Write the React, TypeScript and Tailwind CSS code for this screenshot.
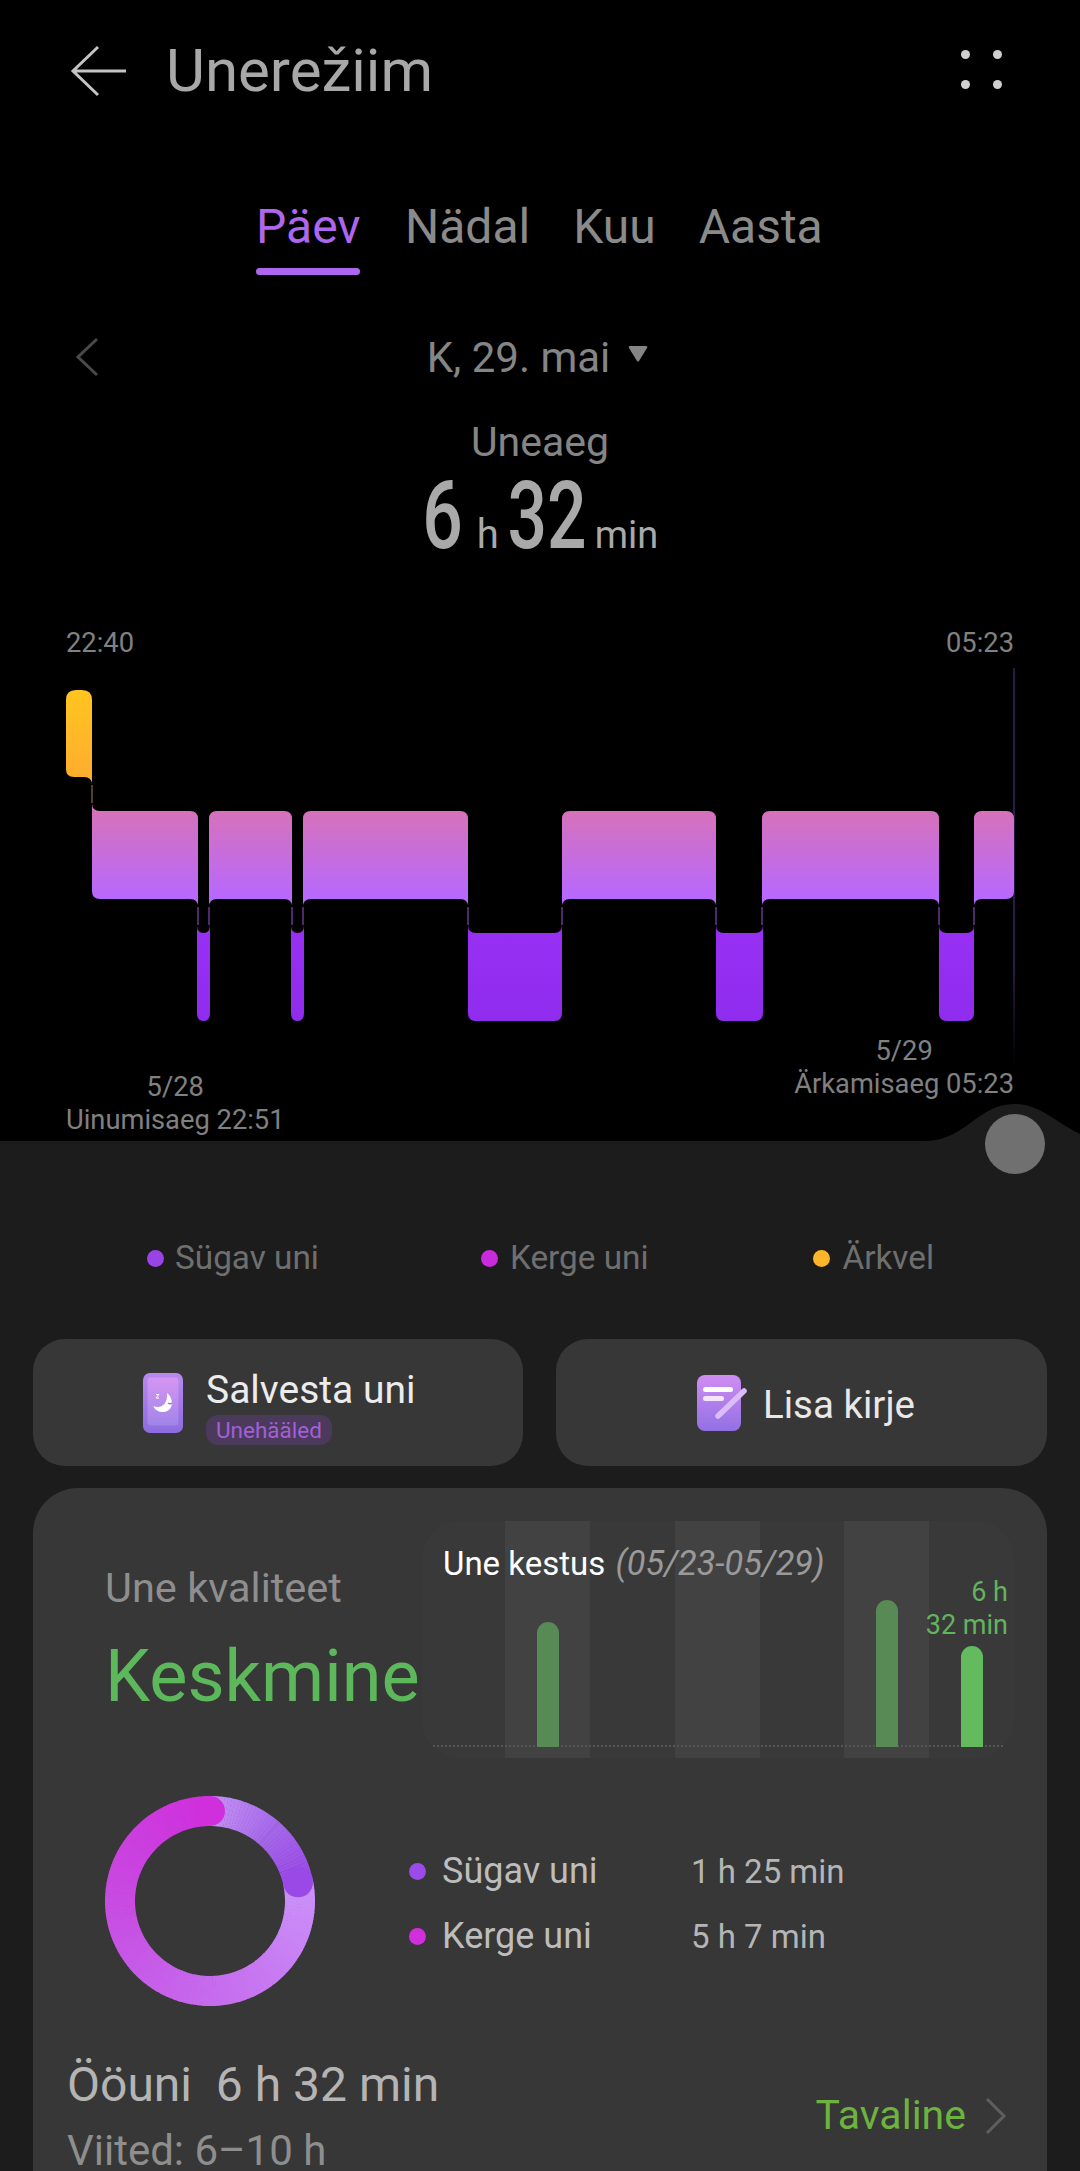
import React from 'react';

const TOP = 811;
const MID = 899;
const DEEP_TOP = 933;
const DEEP_BOTTOM = 1021;

// x ranges of the sleep stages, in page pixels
const LIGHT = [
  [92, 198],
  [209, 292],
  [303, 468],
  [562, 716],
  [762, 939],
  [974, 1014],
];
const DEEP = [
  [197, 210],
  [291, 304],
  [468, 562],
  [716, 763],
  [939, 974],
];
const LINKS = [198, 209, 292, 303, 468, 562, 716, 762, 939, 974];

const lightPath = (l: number, r: number, i: number) => {
  const first = i === 0;
  const last = i === LIGHT.length - 1;
  const c = 8;
  const topLeft = first ? `M${l} ${TOP - c} Q${l} ${TOP} ${l + c} ${TOP}` : `M${l} ${TOP + c} Q${l} ${TOP} ${l + c} ${TOP}`;
  const right = `H${r - c} Q${r} ${TOP} ${r} ${TOP + c}`;
  const bottomRight = last ? `V${MID - c} Q${r} ${MID} ${r - c} ${MID}` : `V${MID + c} Q${r} ${MID} ${r - c} ${MID}`;
  const bottomLeft = first ? `H${l + c} Q${l} ${MID} ${l} ${MID - c}` : `H${l + c} Q${l} ${MID} ${l} ${MID + c}`;
  return `${topLeft} ${right} ${bottomRight} ${bottomLeft} Z`;
};

const deepPath = (l: number, r: number) => {
  const c = Math.min(8, (r - l) / 2);
  return `M${l} ${DEEP_TOP - 8} Q${l} ${DEEP_TOP} ${l + c} ${DEEP_TOP} H${r - c} Q${r} ${DEEP_TOP} ${r} ${DEEP_TOP - 8} V${DEEP_BOTTOM - 8} Q${r} ${DEEP_BOTTOM} ${r - c} ${DEEP_BOTTOM} H${l + c} Q${l} ${DEEP_BOTTOM} ${l} ${DEEP_BOTTOM - 8} Z`;
};

const SleepChart = () => (
  <svg width="1080" height="356" viewBox="0 666 1080 356" className="block overflow-visible">
    <defs>
      <linearGradient id="light" gradientUnits="userSpaceOnUse" x1="0" y1={TOP} x2="0" y2={MID}>
        <stop offset="0" stopColor="#d672ba" />
        <stop offset="1" stopColor="#b768ff" />
      </linearGradient>
      <linearGradient id="deep" gradientUnits="userSpaceOnUse" x1="0" y1={DEEP_TOP} x2="0" y2={DEEP_BOTTOM}>
        <stop offset="0" stopColor="#9730f2" />
        <stop offset="1" stopColor="#8f2cee" />
      </linearGradient>
      <linearGradient id="awake" gradientUnits="userSpaceOnUse" x1="0" y1="690" x2="0" y2="785">
        <stop offset="0" stopColor="#ffc520" />
        <stop offset="1" stopColor="#ffab30" />
      </linearGradient>
      <linearGradient id="now" x1="0" y1="0" x2="0" y2="1">
        <stop offset="0" stopColor="#2b1a44" />
        <stop offset="0.75" stopColor="#2b1a44" />
        <stop offset="1" stopColor="#000000" />
      </linearGradient>
    </defs>
    <rect x="1013" y="668" width="2" height="398" fill="url(#now)" />
    <path d="M92 785 V803" stroke="#a9786e" strokeWidth="1" />
    {LINKS.map((x) => (
      <path key={x} d={`M${x} ${MID + 8} V${DEEP_TOP - 8}`} stroke="#9a55d8" strokeWidth="1" />
    ))}
    <path
      d="M76 690 H82 Q92 690 92 700 V785 Q92 777 84 777 H74 Q66 777 66 769 V700 Q66 690 76 690 Z"
      fill="url(#awake)"
    />
    {LIGHT.map(([l, r], i) => (
      <path key={l} d={lightPath(l, r, i)} fill="url(#light)" />
    ))}
    {DEEP.map(([l, r]) => (
      <path key={l} d={deepPath(l, r)} fill="url(#deep)" />
    ))}
  </svg>
);

const mix = (a: number[], b: number[], t: number) =>
  `rgb(${a.map((v, i) => Math.round(v + (b[i] - v) * t)).join(',')})`;

const point = (deg: number) => {
  const rad = ((deg - 90) * Math.PI) / 180;
  return [210 + 90 * Math.cos(rad), 90 * Math.sin(rad) + 90 + 15];
};

const arc = (from: number, to: number) => {
  const [x1, y1] = point(from);
  const [x2, y2] = point(to);
  return `M${x1.toFixed(2)} ${y1.toFixed(2)} A90 90 0 0 1 ${x2.toFixed(2)} ${y2.toFixed(2)}`;
};

// colour stops walked clockwise from the top of the ring
const ringColor = (deg: number) => {
  const stops: [number, number[]][] = [
    [0, [196, 146, 245]],
    [41, [166, 104, 235]],
    [78, [154, 72, 230]],
    [78.01, [203, 146, 249]],
    [180, [198, 107, 238]],
    [270, [200, 75, 226]],
    [360, [208, 47, 220]],
  ];
  for (let i = 0; i < stops.length - 1; i++) {
    if (deg <= stops[i + 1][0]) {
      return mix(stops[i][1], stops[i + 1][1], (deg - stops[i][0]) / (stops[i + 1][0] - stops[i][0]));
    }
  }
  return 'rgb(208,47,220)';
};

const Donut = () => {
  const steps = Array.from({ length: 180 }, (_, i) => i * 2);
  const lower = steps.filter((d) => d >= 78);
  const upper = steps.filter((d) => d < 78);
  const capDeep = point(78);
  const capTop = point(0);
  return (
    <svg width="210" height="210" viewBox="105 0 210 210" className="block shrink-0">
      {lower.map((d) => (
        <path key={d} d={arc(d, d + 2.4)} stroke={ringColor(d + 1)} strokeWidth="30" fill="none" />
      ))}
      {upper.map((d) => (
        <path key={d} d={arc(d, d + 2.2)} stroke={ringColor(d + 1)} strokeWidth="30" fill="none" />
      ))}
      <path d={arc(41, 41.2)} stroke="#7d47b8" strokeWidth="30" fill="none" />
      <circle cx={capDeep[0]} cy={capDeep[1]} r="15" fill="#9a48e6" />
      <circle cx={capTop[0]} cy={capTop[1]} r="15" fill="#d02fdc" />
    </svg>
  );
};

const SaveIcon = () => (
  <svg width="40" height="60" viewBox="0 0 40 60" className="block shrink-0">
    <defs>
      <linearGradient id="saveOuter" x1="0" y1="0" x2="0" y2="1">
        <stop offset="0" stopColor="#b98af0" />
        <stop offset="1" stopColor="#8d6be0" />
      </linearGradient>
      <linearGradient id="saveInner" x1="0" y1="0" x2="0" y2="1">
        <stop offset="0" stopColor="#d596f2" />
        <stop offset="1" stopColor="#a184e8" />
      </linearGradient>
    </defs>
    <rect width="40" height="60" rx="7" fill="url(#saveOuter)" />
    <rect x="4.5" y="4.5" width="31" height="48" rx="3" fill="url(#saveInner)" />
    <path d="M24 20 C31 25 31 38 21 39 C15 39.500 11 36 10.500 33 C16 36 25 33 24 20 Z" fill="#ffffff" />
    <path d="M13 21.500 H16 L13 25 H16" stroke="#ffffff" strokeWidth="1" fill="none" />
    <path d="M25 30 q2 1.500 4 0" stroke="#9d6fd8" strokeWidth="1.500" fill="none" />
  </svg>
);

const NoteIcon = () => (
  <svg width="50" height="58" viewBox="0 0 50 58" className="block shrink-0">
    <defs>
      <linearGradient id="note" x1="0" y1="0" x2="0" y2="1">
        <stop offset="0" stopColor="#d08df2" />
        <stop offset="1" stopColor="#9270e4" />
      </linearGradient>
    </defs>
    <rect width="44" height="56" y="1" rx="8" fill="url(#note)" />
    <rect x="6" y="13" width="30" height="5" rx="2.500" fill="#ffffff" />
    <rect x="6" y="22" width="21" height="5" rx="2.500" fill="#f3e6fb" />
    <path d="M21 42 L47 17" stroke="#dcbcf8" strokeWidth="5.500" strokeLinecap="round" />
  </svg>
);

const Dot = ({ className }: { className: string }) => (
  <span className={`block w-[17px] h-[17px] rounded-full shrink-0 ${className}`} />
);

const App = () => {
  return (
    <div className="w-[1080px] h-[2171px] overflow-hidden bg-black font-['Roboto',sans-serif]">
      <div className="h-[1141px] overflow-hidden">
        {/* header */}
        <div className="h-[140px] pl-[70px] pr-[78px] pt-[2px] flex items-center">
          <svg width="58" height="52" viewBox="0 0 58 52" className="shrink-0 block">
            <path d="M28 2 L3 26 L28 50 M3 26 H56" stroke="#c4c4c4" strokeWidth="3" fill="none" />
          </svg>
          <div className="ml-[38px] text-[60px] leading-none text-[#a8a8a8]">Unerežiim</div>
          <div className="ml-auto mt-[-4px] grid grid-cols-2 gap-x-[23px] gap-y-[21px]">
            <span className="w-[9px] h-[9px] rounded-full bg-[#d0d0d0]" />
            <span className="w-[9px] h-[9px] rounded-full bg-[#d0d0d0]" />
            <span className="w-[9px] h-[9px] rounded-full bg-[#d0d0d0]" />
            <span className="w-[9px] h-[9px] rounded-full bg-[#d0d0d0]" />
          </div>
        </div>

        {/* tabs */}
        <div className="mt-[55px] h-[132px] pl-[256px] flex items-start text-[48px] leading-[52px] text-[#8a8a8a]">
          <div className="flex flex-col w-[104px] mr-[45px] pt-[6px]">
            <span className="text-[#ae66ee] text-center">Päev</span>
            <span className="block h-[7px] mt-[15px] rounded-full bg-[#ae66ee]" />
          </div>
          <span className="pt-[6px] mr-[43px]">Nädal</span>
          <span className="pt-[6px] mr-[43px]">Kuu</span>
          <span className="pt-[6px]">Aasta</span>
        </div>

        {/* date */}
        <div className="relative h-[60px] flex items-center justify-center text-[42px] text-[#858585]">
          <svg width="26" height="40" viewBox="0 0 26 40" className="absolute left-[74px] top-[10px] block">
            <path d="M23 2 L4 20 L23 38" stroke="#4a4a4a" strokeWidth="3" fill="none" />
          </svg>
          <span className="ml-[-5px]">K, 29. mai</span>
          <svg width="20" height="16" viewBox="0 0 20 16" className="ml-[18px] mb-[6px] block">
            <path d="M2 0 H18 Q20 0 19 2 L11 15 Q10 16 9 15 L1 2 Q0 0 2 0 Z" fill="#858585" />
          </svg>
        </div>

        {/* total */}
        <div className="mt-[26px] mb-[3px] text-center text-[41px] leading-[58px] text-[#858585]">Uneaeg</div>
        <div className="flex items-baseline justify-center h-[84px] text-[#a9a9a9]">
          <span className="inline-flex justify-center w-[41px] scale-x-[0.76] text-[94px] leading-[84px] font-medium">6</span>
          <span className="ml-[14px] text-[40px]">h</span>
          <span className="ml-[11px] inline-flex justify-center w-[74px] scale-x-[0.74] text-[94px] leading-[84px] font-medium">32</span>
          <span className="ml-[11px] text-[38px]">min</span>
        </div>

        {/* chart */}
        <div className="mt-[67px] pl-[66px] pr-[66px] h-[41px] flex justify-between text-[27.300px] leading-[36px] text-[#808080]">
          <span>22:40</span>
          <span>05:23</span>
        </div>
        <SleepChart />
        <div className="pl-[66px] pr-[66px] flex justify-between text-[27.300px] leading-[33px] text-[#808080]">
          <div className="flex flex-col items-center mt-[49px]">
            <span>5/28</span>
            <span>Uinumisaeg 22:51</span>
          </div>
          <div className="flex flex-col items-center mt-[13px]">
            <span>5/29</span>
            <span>Ärkamisaeg 05:23</span>
          </div>
        </div>
      </div>

      {/* lower panel */}
      <div className="relative h-[1030px] bg-[#1c1c1c]">
        <svg width="160" height="37" viewBox="920 1104 160 37" className="absolute right-0 bottom-full block">
          <path d="M925 1141 C965 1141 978 1104 1014 1104 C1040 1104 1055 1122 1080 1134 V1141 Z" fill="#1c1c1c" />
        </svg>
        <span className="absolute left-[985px] top-[-27px] w-[60px] h-[60px] rounded-full bg-[#707070]" />

        <div className="h-[198px] pt-[99px] flex items-start text-[33.300px] leading-[36px] text-[#6f6f6f]">
          <div className="ml-[147px] flex items-center gap-[11px]">
            <Dot className="bg-[#9a44e8]" />
            <span>Sügav uni</span>
          </div>
          <div className="ml-[162px] flex items-center gap-[12px]">
            <Dot className="bg-[#c92bdc]" />
            <span>Kerge uni</span>
          </div>
          <div className="ml-[165px] flex items-center gap-[12px]">
            <Dot className="bg-[#fdb52a]" />
            <span>Ärkvel</span>
          </div>
        </div>

        <div className="mx-[33px] flex gap-[33px] h-[127px]">
          <div className="w-[490px] rounded-[32px] bg-[#373737] flex items-center pl-[110px]">
            <SaveIcon />
            <div className="ml-[23px] mt-[7px] flex flex-col items-start">
              <span className="text-[39px] leading-[46px] text-[#ececec]">Salvesta uni</span>
              <span className="mt-[2px] px-[10px] h-[30px] rounded-[12px] bg-[#4b3a5c] text-[22.500px] leading-[30px] text-[#a35fd9]">
                Unehääled
              </span>
            </div>
          </div>
          <div className="w-[491px] rounded-[32px] bg-[#373737] flex items-center pl-[141px]">
            <NoteIcon />
            <span className="ml-[16px] mt-[5px] text-[38.500px] text-[#e8e8e8]">Lisa kirje</span>
          </div>
        </div>

        <div className="mx-[33px] mt-[22px] h-[700px] rounded-t-[45px] bg-[#373737] relative">
          <div className="flex h-[308px] pt-[33px]">
            <div className="pl-[72px] w-[389px] pt-[43px]">
              <div className="text-[41.500px] leading-[48px] text-[#8e8e8e]">Une kvaliteet</div>
              <div className="mt-[23px] text-[72px] leading-[84px] text-[#5db85c] whitespace-nowrap">Keskmine</div>
            </div>
            <div className="relative w-[592px] h-[237px] rounded-[38px] bg-[#393939] overflow-hidden">
              <div className="absolute inset-y-0 left-[83px] w-[85px] bg-[#424242]" />
              <div className="absolute inset-y-0 left-[253px] w-[85px] bg-[#424242]" />
              <div className="absolute inset-y-0 left-[422px] w-[85px] bg-[#424242]" />
              <div className="absolute left-[8px] right-[8px] top-[224px] border-t-2 border-dotted border-[#555555]" />
              <div className="absolute left-[115px] top-[101px] w-[22px] h-[125px] rounded-t-full bg-[#578a55]" />
              <div className="absolute left-[454px] top-[79px] w-[22px] h-[147px] rounded-t-full bg-[#578a55]" />
              <div className="absolute left-[539px] top-[125px] w-[22px] h-[101px] rounded-t-full bg-[#63bb5e]" />
              <div className="relative pl-[21px] pt-[21px] text-[33px] leading-[42px] text-white whitespace-nowrap">
                Une kestus <span className="ml-[2px] italic text-[34.300px] text-[#9a9a9a]">(05/23-05/29)</span>
              </div>
              <div className="absolute right-[6px] top-[55px] text-right text-[27px] leading-[33px] text-[#63b35e]">
                6 h
                <br />
                32 min
              </div>
            </div>
          </div>

          <div className="flex h-[210px] ml-[72px]">
            <Donut />
            <div className="ml-[94px] mt-[43px] leading-[65px]">
              <div className="flex items-center">
                <Dot className="bg-[#9a4be8]" />
                <span className="ml-[16px] w-[249px] text-[36px] text-[#bdbdbd]">Sügav uni</span>
                <span className="text-[33px] text-[#b5b5b5]">1 h 25 min</span>
              </div>
              <div className="flex items-center">
                <Dot className="bg-[#d02fdc]" />
                <span className="ml-[16px] w-[249px] text-[36px] text-[#bdbdbd]">Kerge uni</span>
                <span className="text-[33px] text-[#b5b5b5]">5 h 7 min</span>
              </div>
            </div>
          </div>

          <div className="flex mt-[51px] pl-[34px] pr-[40px]">
            <div>
              <div className="text-[48px] leading-[56px] text-[#b4b4b4] whitespace-nowrap">Ööuni&nbsp;&nbsp;6 h 32 min</div>
              <div className="mt-[14px] text-[42px] leading-[48px] text-[#8e8e8e]">Viited: 6–10 h</div>
            </div>
            <div className="ml-auto mt-[31px] flex items-center h-[56px] text-[41px] text-[#6cb33f]">
              <span>Tavaline</span>
              <svg width="22" height="38" viewBox="0 0 22 38" className="ml-[19px] block">
                <path d="M2 2 L19 19 L2 36" stroke="#5e5e5e" strokeWidth="3" fill="none" />
              </svg>
            </div>
          </div>
        </div>
      </div>
    </div>
  );
};

export default App;
